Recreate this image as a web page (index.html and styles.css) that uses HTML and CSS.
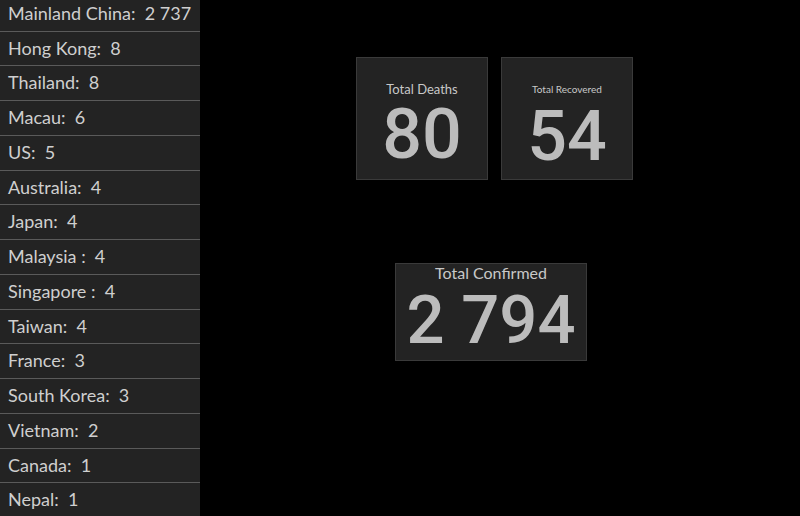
FILE: index.html
```html
<!DOCTYPE html>
<html>
<head>
<meta charset="utf-8">
<link rel="stylesheet" href="styles.css">
</head>
<body>
<div class="page">
  <ul class="list">
    <li>Mainland China:&nbsp; 2 737</li>
    <li>Hong Kong:&nbsp; 8</li>
    <li>Thailand:&nbsp; 8</li>
    <li>Macau:&nbsp; 6</li>
    <li>US:&nbsp; 5</li>
    <li>Australia:&nbsp; 4</li>
    <li>Japan:&nbsp; 4</li>
    <li>Malaysia :&nbsp; 4</li>
    <li>Singapore :&nbsp; 4</li>
    <li>Taiwan:&nbsp; 4</li>
    <li>France:&nbsp; 3</li>
    <li>South Korea:&nbsp; 3</li>
    <li>Vietnam:&nbsp; 2</li>
    <li>Canada:&nbsp; 1</li>
    <li>Nepal:&nbsp; 1</li>
  </ul>
  <main class="main">
    <div class="row">
      <div class="card small">
        <div class="label deaths">Total Deaths</div>
        <div class="num">80</div>
      </div>
      <div class="card small">
        <div class="label recovered">Total Recovered</div>
        <div class="num">54</div>
      </div>
    </div>
    <div class="card big">
      <div class="label confirmed">Total Confirmed</div>
      <div class="num bignum">2 794</div>
    </div>
  </main>
</div>
</body>
</html>
```
FILE: styles.css
```css
html, body {
  margin: 0;
  padding: 0;
  background: #000;
  height: 100%;
  overflow: hidden;
}
body {
  font-family: Lato, "Noto Sans", sans-serif;
  color: #cfcfcf;
}
.page {
  display: flex;
  height: 516px;
}
.list {
  width: 200px;
  flex: none;
  margin: 0;
  padding: 0;
  list-style: none;
  background: #232323;
  height: 516px;
  overflow: hidden;
}
.list li {
  box-sizing: border-box;
  height: 34.75px;
  line-height: 33.75px;
  border-bottom: 1px solid #5a5a5a;
  padding-left: 8px;
  font-size: 18px;
  white-space: nowrap;
}
.list li:first-child {
  height: 31.5px;
  line-height: 27px;
}
.main {
  flex: 1;
  padding-top: 57px;
}
.row {
  display: flex;
  gap: 13px;
  margin-left: 156px;
}
.card {
  box-sizing: border-box;
  background: #232323;
  border: 1px solid #3a3a3a;
  display: flex;
  flex-direction: column;
  align-items: center;
}
.small {
  width: 132px;
  height: 123px;
}
.label {
  color: #c8c8c8;
  white-space: nowrap;
}
.deaths {
  font-size: 13px;
  margin-top: 23px;
  line-height: 16px;
}
.recovered {
  font-size: 10px;
  margin-top: 25px;
  line-height: 13px;
}
.num {
  font-family: Roboto, "Liberation Sans", sans-serif;
  color: #bcbcbc;
  font-size: 70px;
  line-height: 56px;
  margin-top: 9px;
  font-weight: 500;
}
.recovered + .num {
  margin-top: 12px;
}
.big {
  width: 192px;
  height: 98px;
  margin-left: 195px;
  margin-top: 83px;
}
.confirmed {
  font-size: 16px;
  line-height: 18px;
  margin-top: 0;
}
.bignum {
  font-size: 67px;
  line-height: 54px;
  margin-top: 11px;
}
```
